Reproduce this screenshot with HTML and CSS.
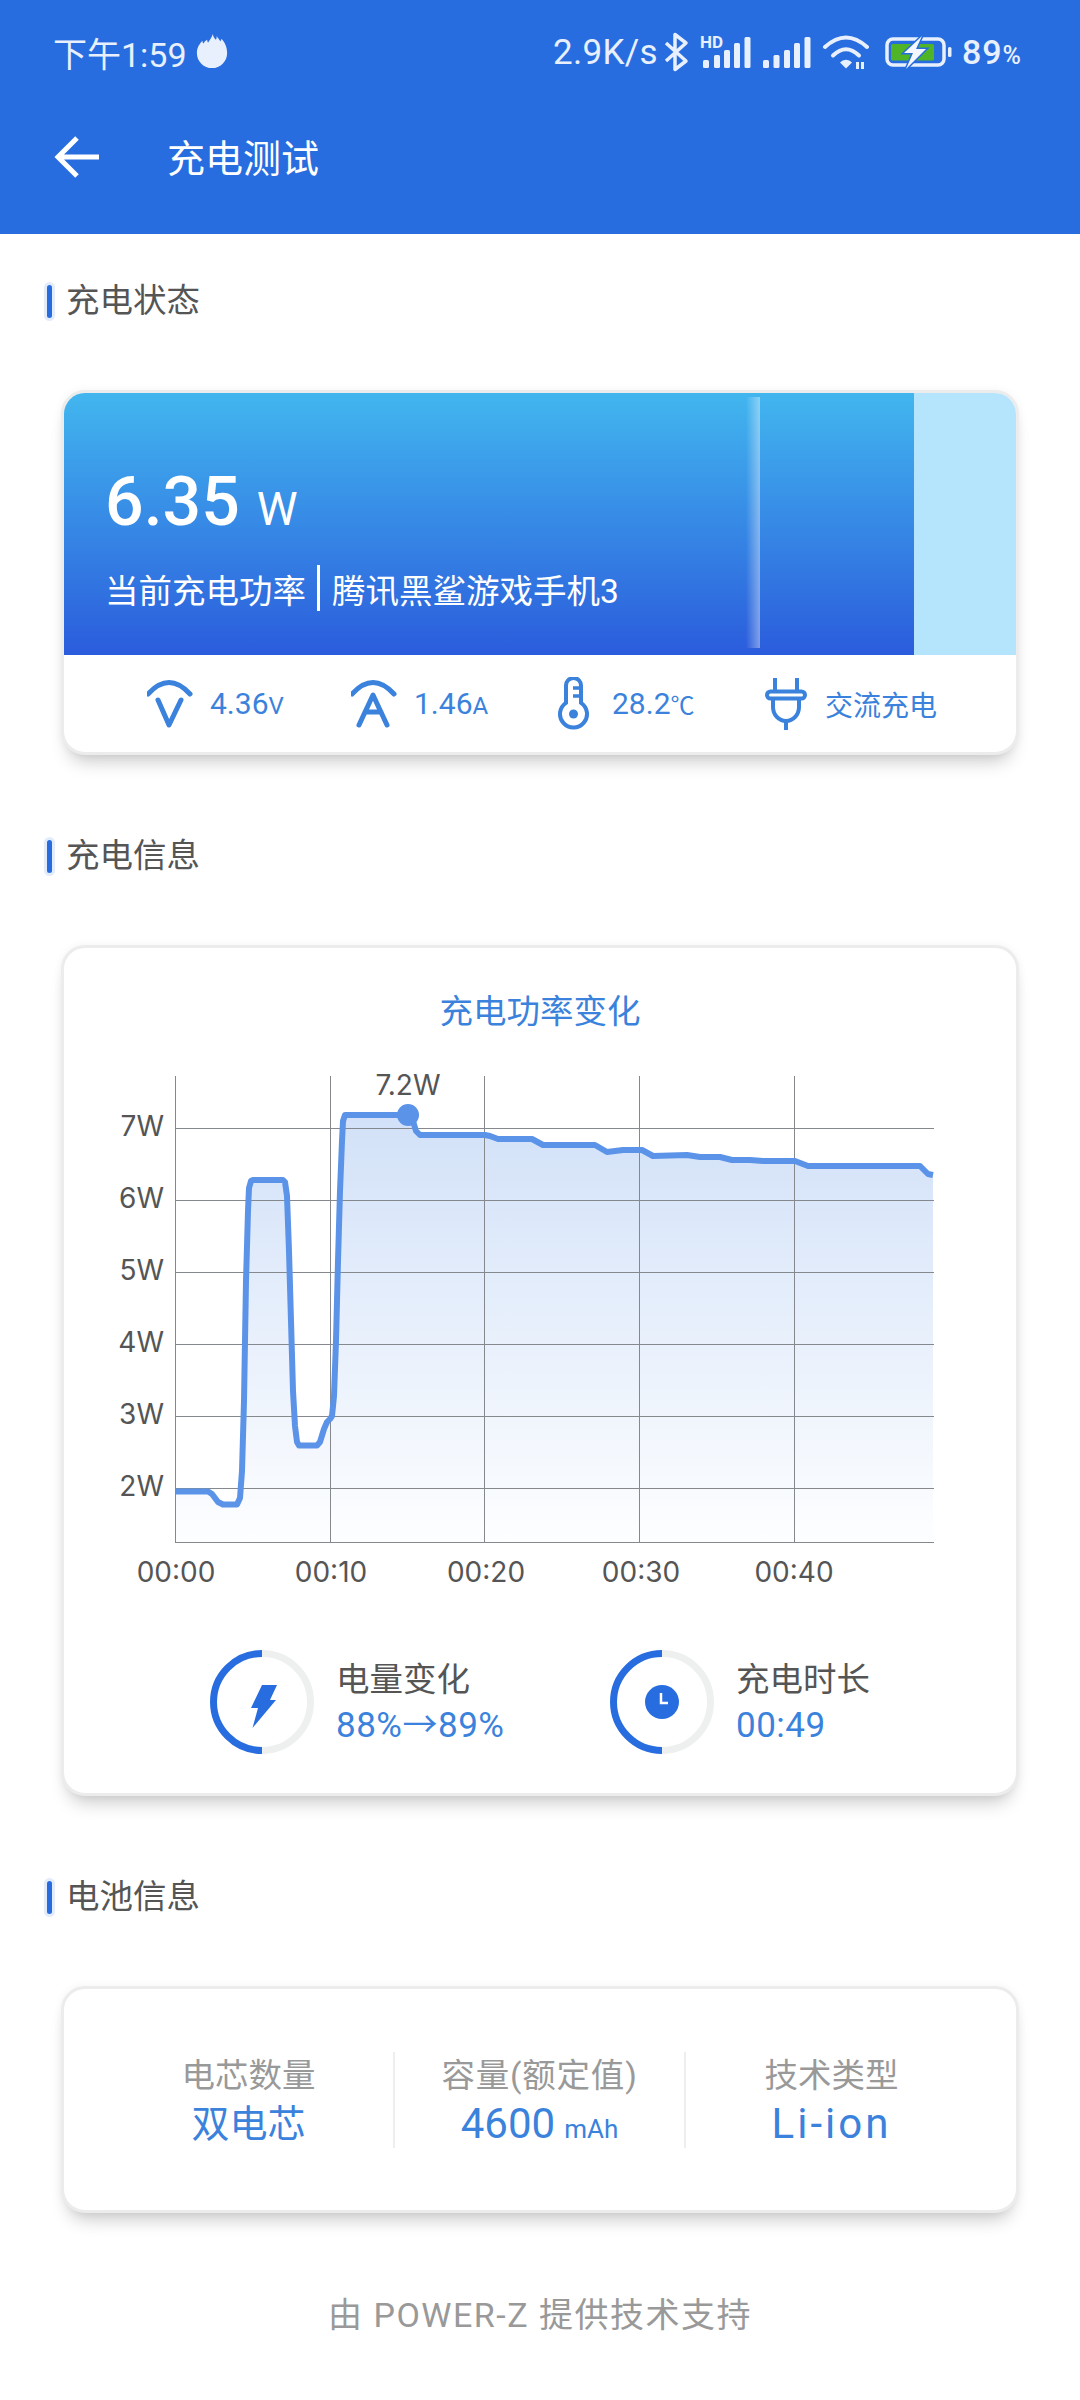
FILE: index.html
```html
<!DOCTYPE html>
<html lang="zh">
<head>
  <meta charset="UTF-8" />
  <meta name="viewport" content="width=device-width, initial-scale=1.0" />
  <title>充电测试</title>
  <link rel="stylesheet" href="styles.css">
</head>
<body>
  <header class="header">
    <div class="status-bar">
      <div class="status-left">
        <span>下午1:59</span>
        <svg class="flame" width="34" height="38" viewBox="194 35 36 38">
          <path d="M213 35c0 3 2 5 3 6 1-1 1-3 1-4 1 2 3 4 4 6 0-1 1-2 1-3 3 3 6 8 6 15a16 16 0 0 1-32 0c0-6 3-10 6-13 0 1 0 2 1 3 1-2 2-3 4-4 0 1 0 2 1 3 2-3 4-6 5-9z" fill="#e8f0fd"/>
        </svg>
      </div>
      <div class="status-right">
        <span class="speed">2.9K/s</span>
        <svg class="status-icons" width="292" height="44" viewBox="664 30 292 44">
          <path d="M668 43L688 61L677 69.500V34.500L688 43L668 61" fill="none" stroke="#e8f0fd" stroke-width="3.500" stroke-linejoin="round"/>
          <text x="702" y="48" class="hd">HD</text>
          <g fill="#e8f0fd">
            <rect x="705" y="60" width="6" height="8" rx="1.500"/>
            <rect x="716" y="55" width="6" height="13" rx="1.500"/>
            <rect x="726" y="50" width="6" height="18" rx="1.500"/>
            <rect x="736" y="43" width="6" height="25" rx="1.500"/>
            <rect x="746.500" y="37" width="6" height="31" rx="1.500"/>
            <rect x="765" y="60" width="6" height="8" rx="1.500"/>
            <rect x="775.500" y="55" width="6" height="13" rx="1.500"/>
            <rect x="786" y="50" width="6" height="18" rx="1.500"/>
            <rect x="796" y="43" width="6" height="25" rx="1.500"/>
            <rect x="806.500" y="37" width="6" height="31" rx="1.500"/>
            <path d="M842 62.500a8 8 0 0 1 12 0l-6 6z"/>
            <path d="M858 62h3v7h-3zM863 62h3v7h-3z"/>
          </g>
          <g fill="none" stroke="#e8f0fd" stroke-width="4" stroke-linecap="round">
            <path d="M827 47Q848 28 869 47"/>
            <path d="M835 55.500Q848 43 861 55.500"/>
          </g>
          <rect x="889" y="39" width="57" height="26" rx="6" fill="none" stroke="#e8f0fd" stroke-width="3.500"/>
          <rect x="893" y="44" width="43" height="16.500" rx="1.500" fill="#4fb526"/>
          <rect x="950" y="47" width="3.500" height="10" rx="1.500" fill="#e8f0fd"/>
          <path d="M924 36L906 53H915L908 69L928 49H918Z" fill="#f4f8fe" stroke="#276de0" stroke-width="3" paint-order="stroke"/>
        </svg>
        <span class="percent">89<small>%</small></span>
      </div>
    </div>
    <div class="nav">
      <svg width="46" height="46" viewBox="0 0 46 46">
        <path d="M45 23H6M23 4L4 23L23 42" fill="none" stroke="#fff" stroke-width="5"/>
      </svg>
      <span class="nav-title">充电测试</span>
    </div>
  </header>

  <h2 class="section-title section-first">充电状态</h2>
  <section class="card power-card">
    <div class="power-track">
      <div class="power-fill">
        <div class="power-value">6.35<span class="power-unit">W</span></div>
        <div class="power-label">
          <span>当前充电功率</span>
          <i class="power-sep"></i>
          <span>腾讯黑鲨游戏手机3</span>
        </div>
        <div class="power-glow"></div>
      </div>
    </div>
    <div class="stats">
      <div class="stat">
        <svg width="46" height="50" viewBox="147 680 46 50" fill="none" stroke="#3a82dc" stroke-width="5" stroke-linecap="round" stroke-linejoin="round">
          <path d="M148 695Q169 672 190 695"/>
          <path d="M158 701L169 726L181 701"/>
        </svg>
        <span>4.36<small>V</small></span>
      </div>
      <div class="stat">
        <svg width="46" height="50" viewBox="351 680 46 50" fill="none" stroke="#3a82dc" stroke-width="5" stroke-linecap="round" stroke-linejoin="round">
          <path d="M352 695Q373 672 394 695"/>
          <path d="M359 726L373 696L387 726M365 713H381"/>
        </svg>
        <span>1.46<small>A</small></span>
      </div>
      <div class="stat">
        <svg width="38" height="54" viewBox="557 679 38 54" fill="none" stroke="#3a82dc" stroke-width="4">
          <path d="M566 704.800V687.500a7.500 7.500 0 0 1 15 0V704.800A13.500 13.500 0 1 1 566 704.800z"/>
          <path d="M573 690H581M573 698H581" stroke-width="3.500"/>
          <circle cx="573.500" cy="716" r="4.500" fill="#3a82dc" stroke="none"/>
        </svg>
        <span>28.2<small>℃</small></span>
      </div>
      <div class="stat">
        <svg width="44" height="52" viewBox="763 679 44 52" fill="none" stroke="#3a82dc" stroke-width="4">
          <path d="M774 679V692M796 679V692M785 722V731"/>
          <rect x="766" y="692.500" width="38" height="7" rx="3.500"/>
          <path d="M772 701V708A13 14 0 0 0 798 708V701"/>
        </svg>
        <span class="stat-cn">交流充电</span>
      </div>
    </div>
  </section>

  <h2 class="section-title">充电信息</h2>
  <section class="card info-card">
    <div class="chart-title">充电功率变化</div>
    <svg class="chart" width="952" height="550" viewBox="64 1050 952 550">
      <defs>
        <linearGradient id="areaFill" x1="0" y1="0" x2="0" y2="1">
          <stop offset="0" stop-color="#d2e1f8"/>
          <stop offset="1" stop-color="#fdfeff"/>
        </linearGradient>
      </defs>
      <path d="M176 1490.500L208 1490.500L212 1493L218 1501L223 1503.500L237 1503.500L240 1497L242 1470L244 1400L246 1280L248 1210L249 1187L251 1180L253 1179L283 1179L285 1181L287 1195L289 1250L291 1320L293 1390L295 1425L297 1441L299 1444.500L317 1444.500L320 1441L324 1428L327 1421L330 1418L332 1415L334 1395L336 1340L338 1260L340 1190L342 1140L343 1120L345 1114L408 1114L413 1120L416 1130L420 1134L485 1134L490 1135L498 1138L532 1138L543 1144L595 1144L607 1151L623 1149L642 1149L653 1155L687 1154L700 1156L720 1156L732 1159L750 1159L763 1160L795 1160L808 1165L920 1165L928 1173L933 1174L933 1541L176 1541Z" fill="url(#areaFill)"/>
      <g stroke="#85898d" stroke-width="1">
        <path d="M175.500 1075V1542M330.500 1075V1542M484.500 1075V1542M639.500 1075V1542M794.500 1075V1542"/>
        <path d="M175 1127.500H934M175 1199.500H934M175 1271.500H934M175 1343.500H934M175 1415.500H934M175 1487.500H934M175 1541.500H934"/>
      </g>
      <path d="M176 1490.500L208 1490.500L212 1493L218 1501L223 1503.500L237 1503.500L240 1497L242 1470L244 1400L246 1280L248 1210L249 1187L251 1180L253 1179L283 1179L285 1181L287 1195L289 1250L291 1320L293 1390L295 1425L297 1441L299 1444.500L317 1444.500L320 1441L324 1428L327 1421L330 1418L332 1415L334 1395L336 1340L338 1260L340 1190L342 1140L343 1120L345 1114L408 1114L413 1120L416 1130L420 1134L485 1134L490 1135L498 1138L532 1138L543 1144L595 1144L607 1151L623 1149L642 1149L653 1155L687 1154L700 1156L720 1156L732 1159L750 1159L763 1160L795 1160L808 1165L920 1165L928 1173L933 1174" fill="none" stroke="#5b93e8" stroke-width="6" stroke-linejoin="round"/>
      <circle cx="408" cy="1114" r="11" fill="#5b93e8"/>
      <g class="axis-text">
        <text x="408" y="1094" text-anchor="middle">7.2W</text>
        <g text-anchor="end">
          <text x="164" y="1135">7W</text>
          <text x="164" y="1207">6W</text>
          <text x="164" y="1279">5W</text>
          <text x="164" y="1351">4W</text>
          <text x="164" y="1423">3W</text>
          <text x="164" y="1495">2W</text>
        </g>
        <g text-anchor="middle">
          <text x="176" y="1581">00:00</text>
          <text x="331" y="1581">00:10</text>
          <text x="486" y="1581">00:20</text>
          <text x="641" y="1581">00:30</text>
          <text x="794" y="1581">00:40</text>
        </g>
      </g>
    </svg>
    <div class="gauges">
      <div class="gauge">
        <svg width="104" height="104" viewBox="0 0 104 104" fill="none" stroke-width="7">
          <path d="M52 3.500A48.500 48.500 0 0 1 52 100.500" stroke="#eef0f0"/>
          <path d="M52 3.500A48.500 48.500 0 0 0 52 100.500" stroke="#276de0"/>
          <path d="M52 35H67L60 50H66L42.500 78L48 58H41Z" fill="#276de0" stroke="none"/>
        </svg>
        <div>
          <div class="gauge-name">电量变化</div>
          <div class="gauge-value">88%→89%</div>
        </div>
      </div>
      <div class="gauge">
        <svg width="104" height="104" viewBox="0 0 104 104" fill="none" stroke-width="7">
          <path d="M52 3.500A48.500 48.500 0 0 1 52 100.500" stroke="#eef0f0"/>
          <path d="M52 3.500A48.500 48.500 0 0 0 52 100.500" stroke="#276de0"/>
          <circle cx="52" cy="52" r="17" fill="#276de0" stroke="none"/>
          <path d="M51 43V53H58" stroke="#fff" stroke-width="2.500"/>
        </svg>
        <div>
          <div class="gauge-name">充电时长</div>
          <div class="gauge-value">00:49</div>
        </div>
      </div>
    </div>
  </section>

  <h2 class="section-title">电池信息</h2>
  <section class="card battery-card">
    <div class="battery-col">
      <div class="battery-name">电芯数量</div>
      <div class="battery-value">双电芯</div>
    </div>
    <div class="battery-col">
      <div class="battery-name battery-name-wide">容量(额定值)</div>
      <div class="battery-value battery-num">4600<small>mAh</small></div>
    </div>
    <div class="battery-col">
      <div class="battery-name">技术类型</div>
      <div class="battery-value battery-num battery-type">Li-ion</div>
    </div>
  </section>

  <footer class="footer">由 POWER-Z 提供技术支持</footer>
</body>
</html>
```

FILE: styles.css
```css
body {
  margin: 0;
  background: #ffffff;
  color: #555;
  font-family: Roboto, "Noto Sans CJK SC", sans-serif;
}

.header {
  height: 234px;
  background: #276de0;
  color: #e8f0fd;
}

.status-bar {
  height: 104px;
  padding: 0 58px 0 53px;
  display: flex;
  align-items: center;
  justify-content: space-between;
  font-size: 34px;
}

.status-left,
.status-right {
  display: flex;
  align-items: center;
}

.flame {
  margin-left: 8px;
}

.speed {
  margin-right: 4px;
  font-size: 35px;
  letter-spacing: 0.3px;
}

.status-icons {
  display: block;
}

.hd {
  font-size: 17px;
  font-weight: 700;
  fill: #e8f0fd;
}

.percent {
  margin-left: 8px;
  font-size: 34px;
  font-weight: 500;
  letter-spacing: 1px;
}

.percent small {
  font-size: 25px;
}

.nav {
  height: 106px;
  padding-left: 54px;
  display: flex;
  align-items: center;
  color: #fff;
}

.nav-title {
  margin-left: 67px;
  padding-bottom: 4px;
  font-size: 38px;
}

.section-title {
  margin: 84px 0 72px 47px;
  height: 34px;
  display: flex;
  align-items: center;
  gap: 14px;
  font-size: 33.500px;
  line-height: 34px;
  font-weight: 400;
  color: #555;
}

.section-title::before {
  content: "";
  width: 5px;
  height: 33px;
  background: #276de0;
  border-radius: 3px;
  box-shadow: 0 0 0 3px #e3ecfa;
}

.section-first {
  margin-top: 50px;
}

.card {
  box-sizing: border-box;
  width: 958px;
  margin-left: 61px;
  background: #fff;
  border: 3px solid #ececec;
  border-radius: 24px;
  box-shadow: 0 14px 18px -8px rgba(0, 0, 0, 0.22), 0 0 8px rgba(0, 0, 0, 0.05);
}

.power-card {
  height: 365px;
  overflow: hidden;
}

.power-track {
  height: 262px;
  background: #b5e5fc;
}

.power-fill {
  position: relative;
  box-sizing: border-box;
  width: 850px;
  height: 100%;
  padding: 70px 0 0 41px;
  background: linear-gradient(180deg, #42b6ef, #2b5cdc);
  color: #fff;
}

.power-glow {
  position: absolute;
  left: 682px;
  top: 4px;
  bottom: 7px;
  width: 14px;
  background: linear-gradient(90deg, rgba(255, 255, 255, 0), rgba(255, 255, 255, 0.4));
}

.power-value {
  font-size: 68px;
  font-weight: 500;
  line-height: 78px;
}

.power-unit {
  margin-left: 17px;
  font-size: 46px;
  font-weight: 400;
}

.power-label {
  margin-top: 17px;
  display: flex;
  align-items: center;
  font-size: 33.500px;
  height: 46px;
}

.power-sep {
  width: 3px;
  height: 46px;
  margin: 0 12px 0 11px;
  background: #fff;
}

.stats {
  height: 97px;
  padding-left: 83px;
  display: grid;
  grid-template-columns: 204px 206px 207px 1fr;
  align-items: center;
  color: #3a82dc;
  font-size: 30px;
}

.stat {
  display: flex;
  align-items: center;
  gap: 17px;
}

.stat svg {
  display: block;
}

.stat small {
  font-size: 24px;
}

.stat-cn {
  font-size: 28px;
}

.info-card {
  height: 851px;
}

.chart-title {
  margin-top: 45px;
  height: 38px;
  line-height: 38px;
  text-align: center;
  font-size: 33.500px;
  color: #3a82dc;
}

.chart {
  display: block;
  margin-top: 20px;
}

.axis-text text {
  font-family: Inter, sans-serif;
  font-size: 28px;
  fill: #555;
}

.gauges {
  margin-top: 49px;
  padding-left: 146px;
  display: grid;
  grid-template-columns: 400px 1fr;
}

.gauge {
  display: flex;
  align-items: center;
  gap: 22px;
}

.gauge svg {
  display: block;
}

.gauge-name,
.gauge-value {
  height: 43px;
  line-height: 43px;
  font-size: 33.500px;
}

.gauge-name {
  color: #555;
}

.gauge-value {
  margin-top: 3px;
  font-size: 35px;
  letter-spacing: 0.5px;
  color: #3a82dc;
}

.battery-card {
  height: 227px;
  padding: 0 40px;
  display: grid;
  grid-template-columns: repeat(3, 291px);
  align-items: center;
}

.battery-col {
  height: 96px;
  text-align: center;
  border-right: 2px solid #eeeeee;
}

.battery-col:last-child {
  border-right: none;
}

.battery-name {
  height: 48px;
  line-height: 48px;
  font-size: 33.500px;
  color: #999;
}

.battery-name-wide {
  letter-spacing: 0.8px;
}

.battery-value {
  height: 48px;
  line-height: 48px;
  font-size: 38px;
  color: #3a82dc;
}

.battery-num {
  font-size: 42px;
}

.battery-type {
  letter-spacing: 3px;
}

.battery-value small {
  margin-left: 9px;
  font-size: 26px;
}

.footer {
  margin-top: 82px;
  text-align: center;
  font-size: 34px;
  line-height: 40px;
  letter-spacing: 1.500px;
  color: #999;
}
```
